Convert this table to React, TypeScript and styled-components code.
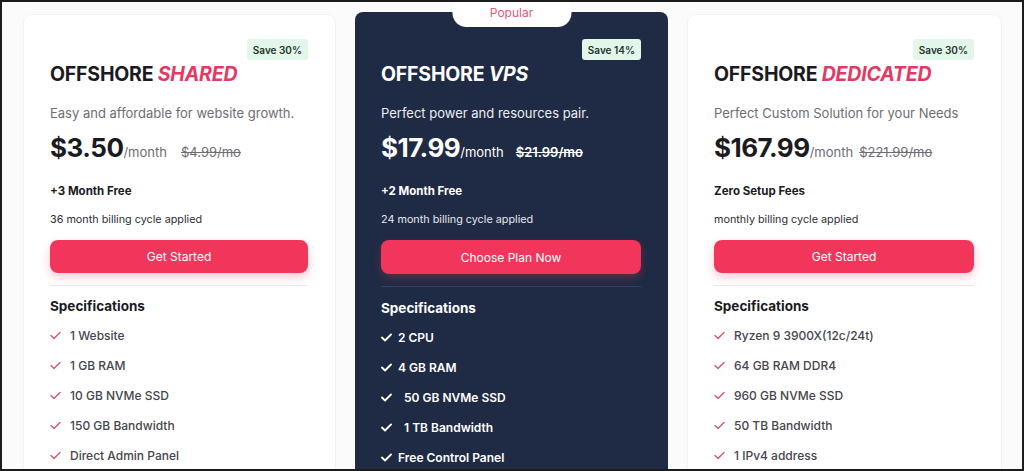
import React from "react";
import styled, { createGlobalStyle } from "styled-components";

const Global = createGlobalStyle`
  html, body { margin: 0; padding: 0; background: #ffffff; }
  body { font-family: "Inter", "Noto Sans", sans-serif; -webkit-font-smoothing: antialiased; }
  * { box-sizing: border-box; }
`;

const Frame = styled.div`
  width: 1024px;
  height: 471px;
  border: 2px solid #1c1c1c;
  background: #fbfbfc;
  overflow: hidden;
  padding: 10px 22px 0 22px;
`;

const Grid = styled.div`
  display: grid;
  grid-template-columns: 311px 313px 313px;
  column-gap: 20px;
  align-items: start;
`;

const Card = styled.div<{ $dark?: boolean }>`
  position: relative;
  display: flex;
  flex-direction: column;
  min-height: 520px;
  border-radius: 8px;
  padding: ${(p) => (p.$dark ? "27px 27px 0 26px" : "24px 27px 0 26px")};
  margin-top: ${(p) => (p.$dark ? "0" : "3px")};
  background: ${(p) => (p.$dark ? "#1f2a44" : "#ffffff")};
  box-shadow: ${(p) => (p.$dark ? "none" : "0 0 0 1px #f1f2f4")};
  color: ${(p) => (p.$dark ? "#ffffff" : "#1b1b1f")};
`;

const PopularTab = styled.div`
  position: absolute;
  top: -14px;
  left: 50%;
  transform: translateX(-50%);
  width: 119px;
  height: 29px;
  background: #ffffff;
  border-radius: 14px;
  display: flex;
  align-items: flex-end;
  justify-content: center;
  padding-bottom: 7px;
  font-size: 12px;
  color: #e4587a;
  font-weight: 400;
`;

const BadgeRow = styled.div`
  display: flex;
  justify-content: flex-end;
`;

const Badge = styled.span`
  display: inline-flex;
  align-items: center;
  height: 21px;
  padding: 0 6px;
  border-radius: 3px;
  background: #e2f6ea;
  color: #24352c;
  font-size: 10px;
  font-weight: 600;
`;

const Title = styled.h2`
  margin: 0;
  font-size: 19.5px;
  line-height: 28px;
  font-weight: 700;
  letter-spacing: -0.2px;
`;

const Accent = styled.em<{ $dark?: boolean }>`
  font-style: italic;
  color: ${(p) => (p.$dark ? "#ffffff" : "#e23a64")};
`;

const Desc = styled.p<{ $dark?: boolean }>`
  margin: 15px 0 0;
  font-size: 13px;
  line-height: 20px;
  color: ${(p) => (p.$dark ? "#eceef2" : "#6d6d72")};
`;

const PriceRow = styled.div`
  display: flex;
  align-items: baseline;
  margin-top: 8px;
  line-height: 34px;
`;

const Price = styled.span`
  font-size: 26px;
  font-weight: 700;
  letter-spacing: -0.5px;
`;

const Per = styled.span<{ $dark?: boolean }>`
  font-size: 13px;
  color: ${(p) => (p.$dark ? "#ffffff" : "#6d6d72")};
`;

const Old = styled.s<{ $dark?: boolean; $gap: number }>`
  margin-left: ${(p) => p.$gap}px;
  font-size: 13px;
  font-weight: ${(p) => (p.$dark ? 600 : 400)};
  color: ${(p) => (p.$dark ? "#ffffff" : "#6d6d72")};
`;

const Perk = styled.div`
  margin-top: 13px;
  font-size: 11.5px;
  line-height: 18px;
  font-weight: 700;
`;

const Cycle = styled.div<{ $dark?: boolean }>`
  margin-top: 12px;
  font-size: 10.8px;
  line-height: 16px;
  color: ${(p) => (p.$dark ? "#e6e8ee" : "#2e2e33")};
`;

const Button = styled.button<{ $dark?: boolean }>`
  margin-top: 12px;
  height: ${(p) => (p.$dark ? "34px" : "33px")};
  width: 100%;
  border: none;
  border-radius: 8px;
  background: #f2365b;
  color: #ffffff;
  font-family: inherit;
  font-size: 12px;
  font-weight: 400;
  box-shadow: 0 4px 10px rgba(242, 54, 91, 0.28);
`;

const Divider = styled.hr<{ $dark?: boolean }>`
  margin: 12px 0 0;
  border: none;
  height: 1px;
  background: ${(p) => (p.$dark ? "#34405c" : "#e6e7ea")};
`;

const SpecTitle = styled.h3<{ $dark?: boolean }>`
  margin: ${(p) => (p.$dark ? "11px" : "10px")} 0 0;
  font-size: 13.5px;
  line-height: 20px;
  font-weight: 700;
`;

const List = styled.ul`
  list-style: none;
  margin: 9px 0 0;
  padding: 0;
  display: flex;
  flex-direction: column;
  gap: 10px;
`;

const Item = styled.li<{ $dark?: boolean }>`
  display: flex;
  align-items: center;
  gap: ${(p) => (p.$dark ? "6px" : "9px")};
  height: 20px;
  font-size: 12px;
  white-space: pre;
  font-weight: ${(p) => (p.$dark ? 600 : 500)};
  color: ${(p) => (p.$dark ? "#ffffff" : "#45454b")};
`;

const Tick = ({ dark }: { dark?: boolean }) => (
  <svg width="11" height="9" viewBox="0 0 11 9" fill="none">
    <polyline
      points="1,4.5 4,7.5 10,1.5"
      stroke={dark ? "#ffffff" : "#d65470"}
      strokeWidth={dark ? 1.8 : 1.4}
      strokeLinecap="round"
      strokeLinejoin="round"
    />
  </svg>
);

type Plan = {
  dark?: boolean;
  name: string;
  save: string;
  desc: string;
  price: string;
  old: string;
  gap: number;
  perk: string;
  cycle: string;
  cta: string;
  specs: string[];
};

const plans: Plan[] = [
  {
    name: "SHARED",
    save: "Save 30%",
    desc: "Easy and affordable for website growth.",
    price: "$3.50",
    old: "$4.99/mo",
    gap: 14,
    perk: "+3 Month Free",
    cycle: "36 month billing cycle applied",
    cta: "Get Started",
    specs: ["1 Website", "1 GB RAM", "10 GB NVMe SSD", "150 GB Bandwidth", "Direct Admin Panel"],
  },
  {
    dark: true,
    name: "VPS",
    save: "Save 14%",
    desc: "Perfect power and resources pair.",
    price: "$17.99",
    old: "$21.99/mo",
    gap: 12,
    perk: "+2 Month Free",
    cycle: "24 month billing cycle applied",
    cta: "Choose Plan Now",
    specs: ["2 CPU", "4 GB RAM", "  50 GB NVMe SSD", "  1 TB Bandwidth", "Free Control Panel"],
  },
  {
    name: "DEDICATED",
    save: "Save 30%",
    desc: "Perfect Custom Solution for your Needs",
    price: "$167.99",
    old: "$221.99/mo",
    gap: 6,
    perk: "Zero Setup Fees",
    cycle: "monthly billing cycle applied",
    cta: "Get Started",
    specs: ["Ryzen 9 3900X(12c/24t)", "64 GB RAM DDR4", "960 GB NVMe SSD", "50 TB Bandwidth", "1 IPv4 address"],
  },
];

const PlanCard = ({ plan }: { plan: Plan }) => (
  <Card $dark={plan.dark}>
    {plan.dark && <PopularTab>Popular</PopularTab>}
    <BadgeRow>
      <Badge>{plan.save}</Badge>
    </BadgeRow>
    <Title>
      OFFSHORE <Accent $dark={plan.dark}>{plan.name}</Accent>
    </Title>
    <Desc $dark={plan.dark}>{plan.desc}</Desc>
    <PriceRow>
      <Price>{plan.price}</Price>
      <Per $dark={plan.dark}>/month</Per>
      <Old $dark={plan.dark} $gap={plan.gap}>
        {plan.old}
      </Old>
    </PriceRow>
    <Perk>{plan.perk}</Perk>
    <Cycle $dark={plan.dark}>{plan.cycle}</Cycle>
    <Button $dark={plan.dark}>{plan.cta}</Button>
    <Divider $dark={plan.dark} />
    <SpecTitle $dark={plan.dark}>Specifications</SpecTitle>
    <List>
      {plan.specs.map((s) => (
        <Item key={s} $dark={plan.dark}>
          <Tick dark={plan.dark} />
          {s}
        </Item>
      ))}
    </List>
  </Card>
);

export default function App() {
  return (
    <>
      <Global />
      <Frame>
        <Grid>
          {plans.map((p) => (
            <PlanCard key={p.name} plan={p} />
          ))}
        </Grid>
      </Frame>
    </>
  );
}
